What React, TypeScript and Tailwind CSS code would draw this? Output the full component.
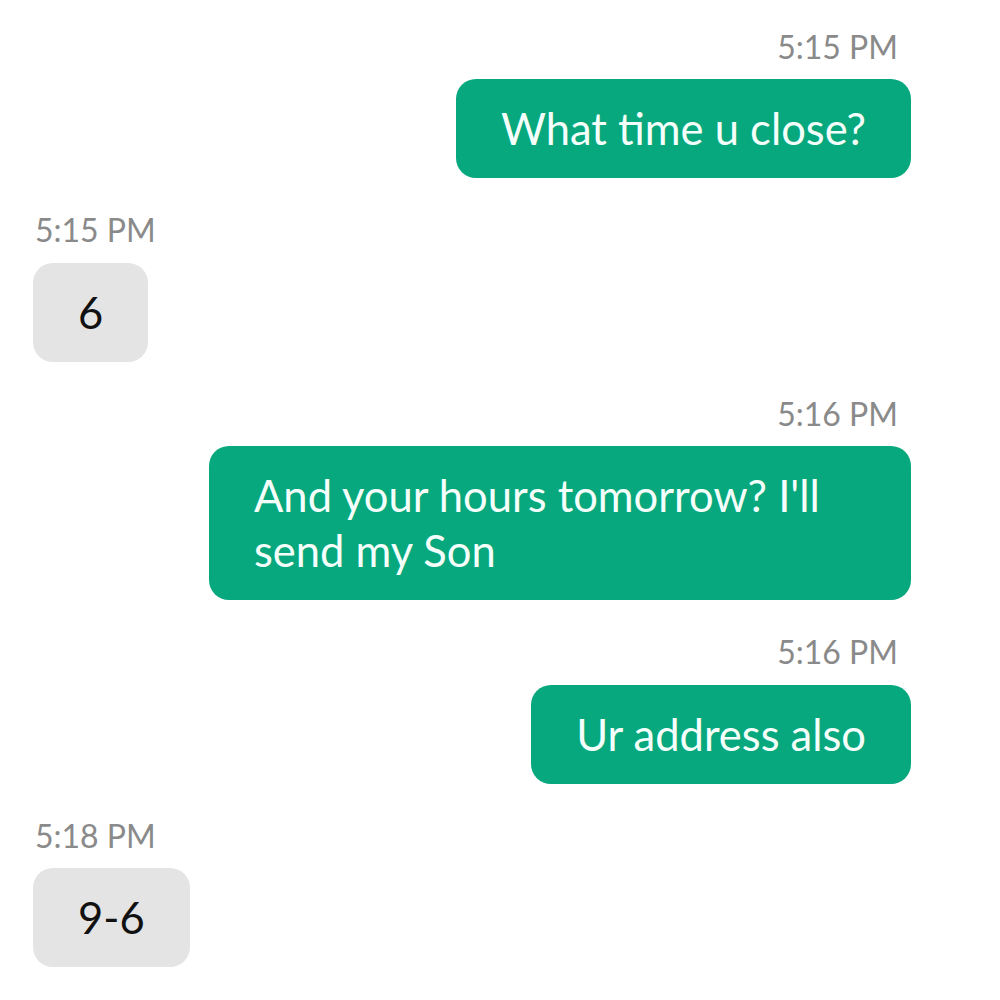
const messages = [
  { time: "5:15 PM", text: "What time u close?", mine: true },
  { time: "5:15 PM", text: "6", mine: false },
  { time: "5:16 PM", text: "And your hours tomorrow? I'll send my Son", mine: true },
  { time: "5:16 PM", text: "Ur address also", mine: true },
  { time: "5:18 PM", text: "9-6", mine: false },
];

function Message({ time, text, mine }: { time: string; text: string; mine: boolean }) {
  return (
    <div className={mine ? "flex flex-col items-end gap-[13px]" : "flex flex-col items-start gap-[13px]"}>
      <div
        className={
          mine
            ? "mr-[13px] text-[32px] leading-[1.2] text-[#8a8a8a]"
            : "ml-[2px] text-[32px] leading-[1.2] text-[#8a8a8a]"
        }
      >
        {time}
      </div>
      <div
        className={
          mine
            ? "max-w-[702px] rounded-[20px] bg-[#07a87d] px-[45px] py-[22px] text-[43.5px] leading-[55px] text-[#f4fffb]"
            : "max-w-[702px] rounded-[20px] bg-[#e4e4e4] px-[45px] py-[22px] text-[43.5px] leading-[55px] text-[#111]"
        }
      >
        {text}
      </div>
    </div>
  );
}

export default function App() {
  return (
    <div
      className="flex min-h-[1000px] w-[1000px] flex-col gap-[33px] bg-white pt-[28px] pl-[33px] pr-[89px]"
      style={{ fontFamily: "Lato, 'Open Sans', sans-serif" }}
    >
      {messages.map((m, i) => (
        <Message key={i} {...m} />
      ))}
    </div>
  );
}
